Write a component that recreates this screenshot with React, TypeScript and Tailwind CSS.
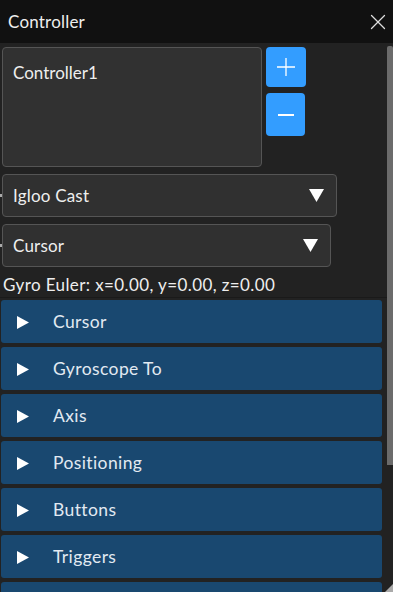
import { X } from "lucide-react";

const sections = ["Cursor", "Gyroscope To", "Axis", "Positioning", "Buttons", "Triggers", ""];

function Caret({ className }: { className?: string }) {
  return (
    <svg viewBox="0 0 14 12" className={className}>
      <path d="M0 0 L14 0 L7 12 Z" fill="currentColor" />
    </svg>
  );
}

function Select({ value, width }: { value: string; width: string }) {
  return (
    <div className="flex items-center shrink-0">
      <span className="w-[2px] h-[3px] bg-[#aaaaaa]" />
      <div
        className={`${width} h-[43px] flex items-center justify-between pl-[10px] pr-[12px] bg-[#303030] border border-[#555555] rounded-[4px] text-[17px] tracking-[0.2px] text-[#eeeeee]`}
      >
        <span>{value}</span>
        <Caret className="w-[15px] h-[13px] text-white" />
      </div>
    </div>
  );
}

export default function App() {
  return (
    <div
      className="w-[393px] h-[592px] overflow-hidden bg-[#222222] flex flex-col relative"
      style={{ fontFamily: "Lato, 'Open Sans', sans-serif" }}
    >
      {/* Title bar */}
      <div className="h-[43px] shrink-0 bg-[#111111] flex items-center justify-between pl-[8px] pr-[2px]">
        <span className="text-[17px] tracking-[0.2px] text-[#eeeeee]">Controller</span>
        <X className="w-[26px] h-[26px] text-[#dddddd]" strokeWidth={1.2} />
      </div>

      <div className="flex flex-1 min-h-0">
        <div className="flex-1 flex flex-col pt-[4px] overflow-hidden">
          {/* list + add/remove */}
          <div className="flex shrink-0 pl-[2px] gap-[4px]">
            <div className="w-[260px] h-[120px] bg-[#313131] border border-[#555555] rounded-[4px] px-[10px] pt-[12px] text-[17px] text-[#eeeeee]">
              Controller1
            </div>
            <div className="flex flex-col gap-[6px]">
              <button className="w-[40px] h-[40px] rounded-[4px] bg-[#339dff] flex items-center justify-center">
                <svg viewBox="0 0 20 20" className="w-[20px] h-[20px]">
                  <path d="M10 1 V19 M1 10 H19" stroke="white" strokeWidth="1.3" />
                </svg>
              </button>
              <button className="w-[39px] h-[43px] rounded-[4px] bg-[#339dff] flex items-center justify-center">
                <svg viewBox="0 0 20 20" className="w-[20px] h-[20px]">
                  <path d="M2 10 H18" stroke="white" strokeWidth="2" />
                </svg>
              </button>
            </div>
          </div>

          <div className="flex flex-col shrink-0 gap-[7px] mt-[7px]">
            <Select value="Igloo Cast" width="w-[335px]" />
            <Select value="Cursor" width="w-[329px]" />
          </div>

          <div className="shrink-0 pl-[3px] h-[31px] pt-[5px] flex items-center text-[17px] tracking-[0.4px] text-[#eeeeee] border-b border-[#1a1a1a]">
            Gyro Euler: x=0.00, y=0.00, z=0.00
          </div>

          {/* Foldouts */}
          <div className="flex flex-col shrink-0 gap-[4px] pl-[1px] pt-[2px] w-[382px]">
            {sections.map((s, i) => (
              <div
                key={i}
                className="h-[43px] shrink-0 bg-[#194870] rounded-[3px] flex items-center pl-[16px] pt-[2px] text-[17.5px] tracking-[0.4px] text-[#e2eaf2]"
              >
                <svg viewBox="0 0 12 13" className="w-[12px] h-[13px] shrink-0 mr-[24px]">
                  <path d="M0 0 L12 6.5 L0 13 Z" fill="white" />
                </svg>
                {s && <span>{s}</span>}
              </div>
            ))}
          </div>
        </div>

        {/* scrollbar */}
        <div className="w-[6px] shrink-0 pt-[3px]">
          <div className="h-[419px] bg-[#6b6b6b] rounded-t-[2px]" />
        </div>
      </div>

      {/* resize grip */}
      <svg viewBox="0 0 8 8" className="absolute right-0 bottom-0 w-[8px] h-[8px]">
        <path d="M8 0 L8 8 L0 8 Z" fill="#aaaaaa" />
      </svg>
    </div>
  );
}
